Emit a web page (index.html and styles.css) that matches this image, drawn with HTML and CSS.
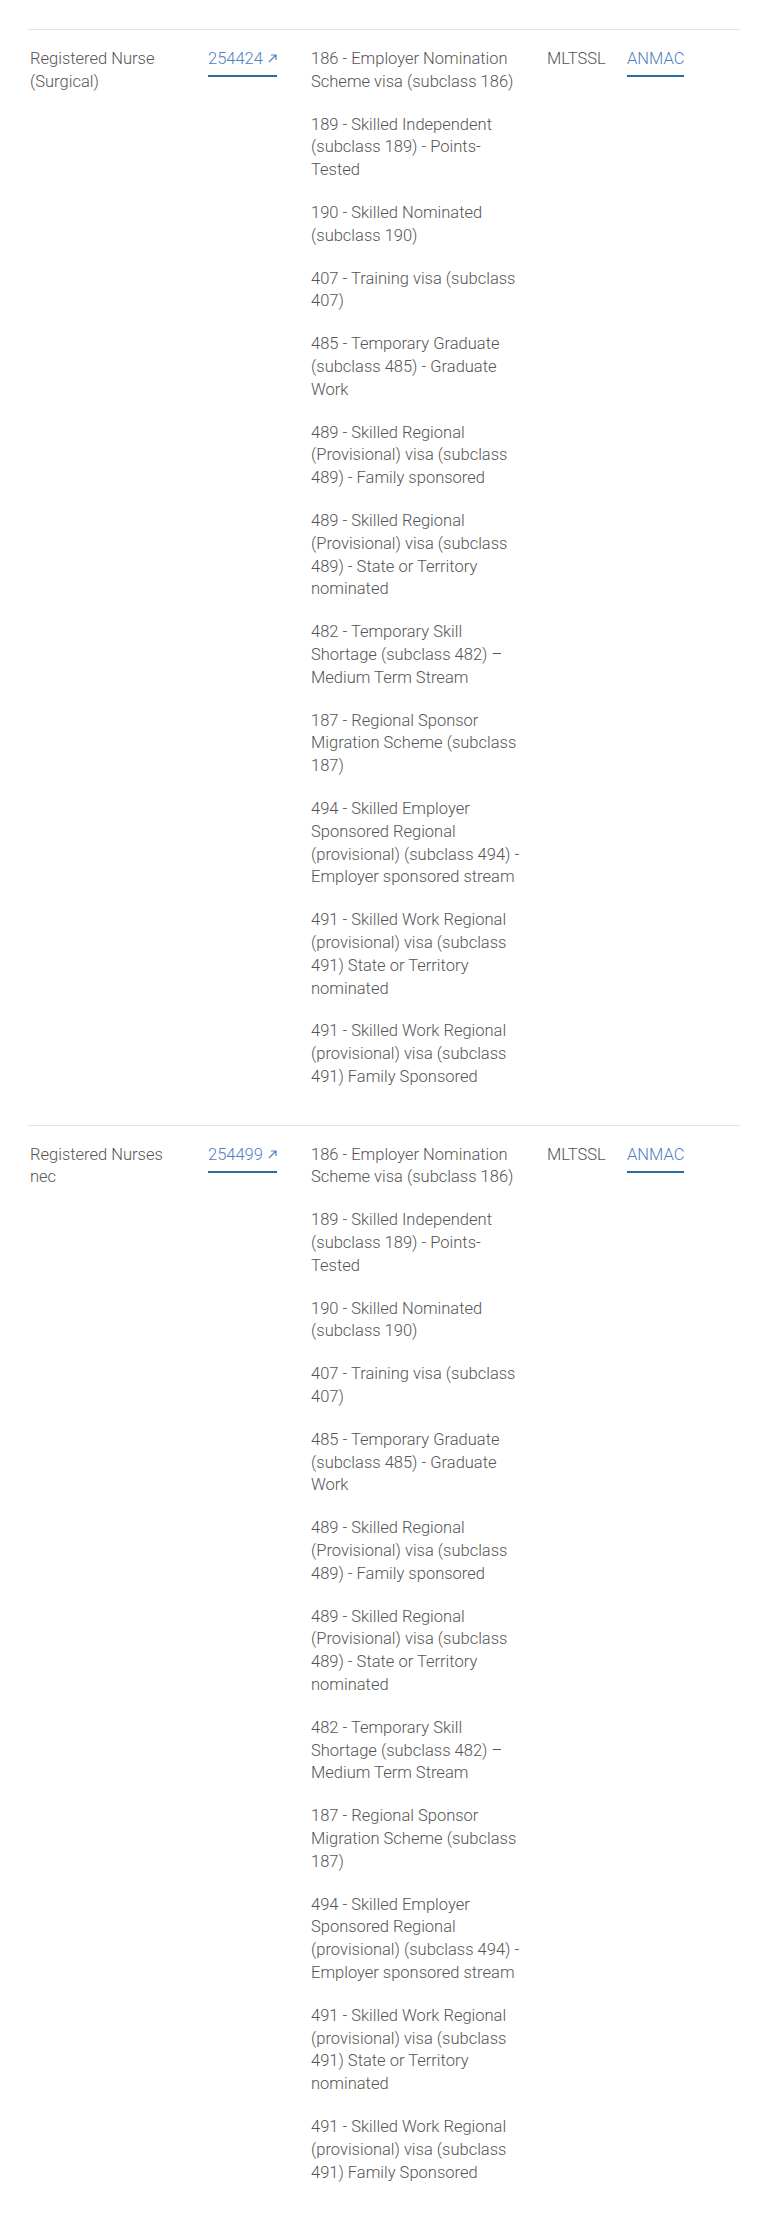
FILE: index.html
```html
<!DOCTYPE html>
<html lang="en">
<head>
<meta charset="utf-8">
<title>Occupations</title>
<link rel="stylesheet" href="styles.css">
</head>
<body>
<div class="table">
  <div class="row">
    <div class="cell c-name">Registered Nurse (Surgical)</div>
    <div class="cell c-code"><a class="link" href="#">254424 <svg class="ext" width="9" height="9" viewBox="0 0 9 9"><path d="M1 8 L8 1 M3 1 H8 V6" fill="none" stroke="currentColor" stroke-width="1.2"/></svg></a></div>
    <div class="cell c-visa">
      <p>186 - Employer Nomination Scheme visa (subclass 186)</p>
      <p>189 - Skilled Independent (subclass 189) - Points-Tested</p>
      <p>190 - Skilled Nominated (subclass 190)</p>
      <p>407 - Training visa (subclass 407)</p>
      <p>485 - Temporary Graduate (subclass 485) - Graduate Work</p>
      <p>489 - Skilled Regional (Provisional) visa (subclass 489) - Family sponsored</p>
      <p>489 - Skilled Regional (Provisional) visa (subclass 489) - State or Territory nominated</p>
      <p>482 - Temporary Skill Shortage (subclass 482) – Medium Term Stream</p>
      <p>187 - Regional Sponsor Migration Scheme (subclass 187)</p>
      <p>494 - Skilled Employer Sponsored Regional (provisional) (subclass 494) - Employer sponsored stream</p>
      <p>491 - Skilled Work Regional (provisional) visa (subclass 491) State or Territory nominated</p>
      <p>491 - Skilled Work Regional (provisional) visa (subclass 491) Family Sponsored</p>
    </div>
    <div class="cell c-list">MLTSSL</div>
    <div class="cell c-auth"><a class="link" href="#">ANMAC</a></div>
  </div>
  <div class="row">
    <div class="cell c-name">Registered Nurses nec</div>
    <div class="cell c-code"><a class="link" href="#">254499 <svg class="ext" width="9" height="9" viewBox="0 0 9 9"><path d="M1 8 L8 1 M3 1 H8 V6" fill="none" stroke="currentColor" stroke-width="1.2"/></svg></a></div>
    <div class="cell c-visa">
      <p>186 - Employer Nomination Scheme visa (subclass 186)</p>
      <p>189 - Skilled Independent (subclass 189) - Points-Tested</p>
      <p>190 - Skilled Nominated (subclass 190)</p>
      <p>407 - Training visa (subclass 407)</p>
      <p>485 - Temporary Graduate (subclass 485) - Graduate Work</p>
      <p>489 - Skilled Regional (Provisional) visa (subclass 489) - Family sponsored</p>
      <p>489 - Skilled Regional (Provisional) visa (subclass 489) - State or Territory nominated</p>
      <p>482 - Temporary Skill Shortage (subclass 482) – Medium Term Stream</p>
      <p>187 - Regional Sponsor Migration Scheme (subclass 187)</p>
      <p>494 - Skilled Employer Sponsored Regional (provisional) (subclass 494) - Employer sponsored stream</p>
      <p>491 - Skilled Work Regional (provisional) visa (subclass 491) State or Territory nominated</p>
      <p>491 - Skilled Work Regional (provisional) visa (subclass 491) Family Sponsored</p>
    </div>
    <div class="cell c-list">MLTSSL</div>
    <div class="cell c-auth"><a class="link" href="#">ANMAC</a></div>
  </div>
</div>
</body>
</html>
```

FILE: styles.css
```css
html, body {
  margin: 0;
  padding: 0;
  background: #ffffff;
}

body {
  font-family: Roboto, "Liberation Sans", Arial, sans-serif;
  font-size: 16.5px;
  font-weight: 300;
  line-height: 22.8px;
  color: #555555;
}

.table {
  margin: 29px 17px 0 28px;
}

.row {
  display: grid;
  grid-template-columns: 178px 103px 236px 80px 1fr;
  border-top: 1px solid #e4e4e4;
  padding: 18px 0 16px 2px;
  align-items: start;
}

.cell {
  min-width: 0;
}

.c-name {
  padding-right: 28px;
}

.c-visa {
  padding-right: 18px;
}

.c-visa p {
  margin: 0 0 20px 0;
}

.link {
  color: #4f80c2;
  text-decoration: none;
  padding-bottom: 7px;
  border-bottom: 2px solid #2b6c9e;
}

.ext {
  display: inline-block;
  vertical-align: 1px;
  margin-left: 1px;
}
```
